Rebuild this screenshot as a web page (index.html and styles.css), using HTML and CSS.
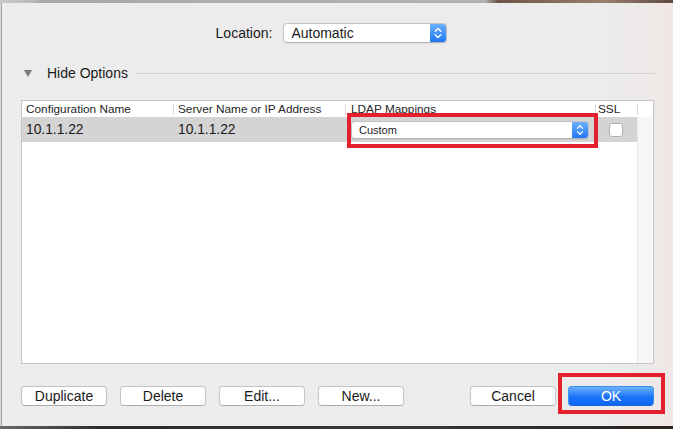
FILE: index.html
```html
<!DOCTYPE html>
<html>
<head>
  <meta charset="UTF-8">
  <title>Directory Servers</title>
  <link rel="stylesheet" href="styles.css">
</head>
<body>
  <div class="desk-top"></div>
  <div class="window">
    <div class="location-row">
      <span class="location-label">Location:</span>
      <div class="popup popup-location">
        <span class="popup-text">Automatic</span>
        <span class="stepper">
          <svg width="16" height="20" viewBox="0 0 16 20"><path d="M5.2 8.2 L8 5.4 L10.8 8.2 M5.2 11.8 L8 14.6 L10.8 11.8" fill="none" stroke="#fff" stroke-width="1.4" stroke-linecap="round" stroke-linejoin="round"/></svg>
        </span>
      </div>
    </div>

    <div class="options-row">
      <svg class="disclosure" width="8" height="7" viewBox="0 0 8 7"><path d="M0 0 H8 L4 7 Z" fill="#7b7b7b"/></svg>
      <span class="options-title">Hide Options</span>
      <span class="rule"></span>
    </div>

    <div class="table">
      <div class="grid">
        <div class="thead">
          <div class="cell c1">Configuration Name</div>
          <div class="cell c2">Server Name or IP Address</div>
          <div class="cell c3">LDAP Mappings</div>
          <div class="cell c4">SSL</div>
        </div>
        <div class="row selected">
          <div class="cell c1">10.1.1.22</div>
          <div class="cell c2">10.1.1.22</div>
          <div class="cell c3">
            <div class="popup popup-small">
              <span class="popup-text">Custom</span>
              <span class="stepper">
                <svg width="16" height="18" viewBox="0 0 16 18"><path d="M5.4 7.4 L8 4.8 L10.6 7.4 M5.4 10.6 L8 13.2 L10.6 10.6" fill="none" stroke="#fff" stroke-width="1.3" stroke-linecap="round" stroke-linejoin="round"/></svg>
              </span>
            </div>
          </div>
          <div class="cell c4"><span class="checkbox"></span></div>
        </div>
        <div class="filler"></div>
      </div>
      <div class="scroller">
        <div class="scroller-head"></div>
        <div class="scroller-track"></div>
      </div>
    </div>

    <div class="buttons">
      <div class="btn-group">
        <button class="btn">Duplicate</button>
        <button class="btn">Delete</button>
        <button class="btn">Edit...</button>
        <button class="btn">New...</button>
      </div>
      <div class="btn-group">
        <button class="btn">Cancel</button>
        <button class="btn btn-default">OK</button>
      </div>
    </div>

    <div class="mark mark-ldap"></div>
    <div class="mark mark-ok"></div>
  </div>
  <div class="desk-bottom"></div>
</body>
</html>
```

FILE: styles.css
```css
* { box-sizing: border-box; }
body { margin: 0; width: 673px; height: 429px; overflow: hidden; background: #d6d6d6; font-family: "Liberation Sans", Arial, sans-serif; color: #1a1a1a; }

.desk-top { height: 3px; background: linear-gradient(to right, #c9c9c9 0, #b9b9b9 5%, #a9a9a9 6%, #b3b3b3 72%, #6e5448 74%, #9b7d70 90%, #5e4a42 100%); }
.desk-bottom { height: 3px; background: linear-gradient(to right, #6f6a66, #2f2a27 15%, #3d3734 60%, #29231f); }

.window { position: relative; height: 423px; margin-left: 1px; border-left: 1px solid #a3a3a3; background: linear-gradient(to right, #ececec 0, #ececec 90%, #efe7e5 100%); }

/* location */
.location-row { display: flex; align-items: center; justify-content: center; gap: 11px; padding-top: 20px; padding-right: 12px; }
.location-label { font-size: 14px; }

.popup { display: flex; align-items: center; background: #fff; border: 1px solid #c3c3c3; border-bottom-color: #b2b2b2; border-radius: 4px; box-shadow: 0 1px 1px rgba(0,0,0,0.06); overflow: hidden; }
.popup-text { flex: 1; }
.stepper { display: flex; align-items: center; justify-content: center; align-self: stretch; width: 16px; background: linear-gradient(#6bb0fb, #1f78f5); }
.popup-location { width: 164px; height: 20px; font-size: 14px; }
.popup-location .popup-text { padding-left: 7px; }
.popup-small { width: 238px; height: 18px; font-size: 11px; }
.popup-small .popup-text { padding-left: 7px; }

/* options */
.options-row { display: flex; align-items: center; height: 16px; margin-top: 22px; padding-left: 22px; padding-right: 18px; }
.disclosure { margin-right: 15px; }
.options-title { font-size: 14px; margin-right: 8px; }
.rule { flex: 1; height: 1px; background: #d3d3d3; }

/* table */
.table { display: flex; height: 264px; margin: 19px 19px 0 19px; border: 1px solid #c6c6c6; background: #fff; }
.grid { width: 615px; display: flex; flex-direction: column; }
.thead, .row { display: flex; }
.thead { height: 16px; font-size: 11.8px; color: #262626; }
.thead .cell { display: flex; align-items: center; }
.thead .c2, .thead .c3, .thead .c4 { background: linear-gradient(#dcdcdc, #dcdcdc) left center / 1px 11px no-repeat; }
.row { height: 25px; font-size: 13.8px; }
.row .cell { display: flex; align-items: center; }
.selected { background: #d4d4d4; }
.cell { padding-left: 4px; }
.c1 { width: 151px; }
.c2 { width: 172px; padding-left: 5px; }
.c3 { width: 250px; padding-left: 6px; }
.c4 { width: 42px; padding-left: 3px; }
.row .c4 { padding-left: 14px; }
.checkbox { width: 14px; height: 14px; background: #fff; border: 1px solid #b0b0b0; border-radius: 3px; }
.filler { flex: 1; }

.scroller { width: 16px; display: flex; flex-direction: column; }
.scroller-head { height: 16px; background: linear-gradient(#dcdcdc, #dcdcdc) left center / 1px 11px no-repeat; }
.scroller-track { flex: 1; background: #f6f6f6; border-left: 1px solid #e6e6e6; }

/* buttons */
.buttons { display: flex; justify-content: space-between; margin: 22px 19px 0 19px; }
.btn-group { display: flex; gap: 13px; }
.btn-group + .btn-group { gap: 12px; }
.btn { width: 86px; height: 20px; padding: 0; font-family: "Liberation Sans", Arial, sans-serif; font-size: 14px; color: #1a1a1a; background: #fff; border: 1px solid #c4c4c4; border-bottom-color: #acacac; border-radius: 4px; }
.btn-default { color: #fff; border-color: #3d8ef7; border-bottom-color: #1c66e4; background: linear-gradient(#6cb3fb, #1a74f7 55%, #0f68f4); }

/* annotation boxes */
.mark { position: absolute; border: 4px solid #e4202c; }
.mark-ldap { left: 345px; top: 110px; width: 251px; height: 35px; }
.mark-ok { left: 556px; top: 370px; width: 107px; height: 41px; }
```
